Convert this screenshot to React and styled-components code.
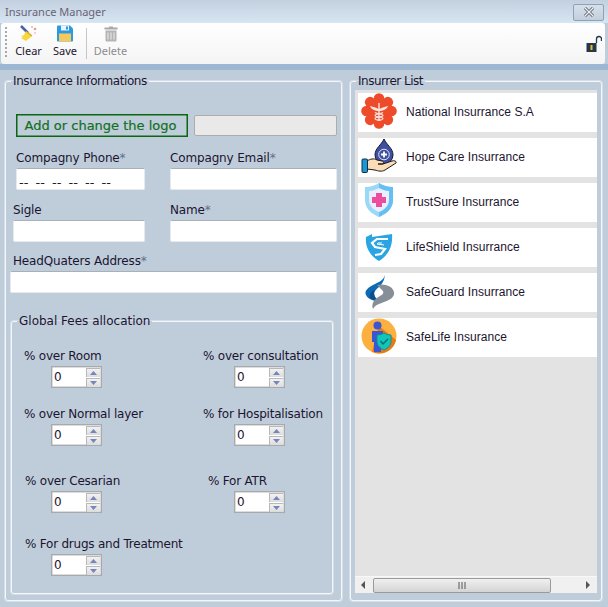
import styled, { createGlobalStyle } from "styled-components";

const GlobalStyle = createGlobalStyle`
  html, body {
    margin: 0;
    padding: 0;
    background: #d9e5f2;
  }
`;

const FlowerLogo = () => (
  <svg width="36" height="36" viewBox="0 0 36 36">
    <g fill="#ee4b2b">
      <circle cx="18" cy="18" r="12.500" />
      {[0, 45, 90, 135, 180, 225, 270, 315].map((a) => (
        <circle key={a} cx={18 + 12.5 * Math.cos((a * Math.PI) / 180)} cy={18 + 12.5 * Math.sin((a * Math.PI) / 180)} r="5.300" />
      ))}
    </g>
    <path d="M9 13c3 .5 6 1.500 9 3 3-1.500 6-2.500 9-3-1 3.500-5 5-9 5s-8-1.500-9-5z" fill="#fbe4dc" />
    <g fill="none" stroke="#fbe4dc" strokeWidth="1.100">
      <path d="M18 10v18" strokeWidth="1.400" />
      <path d="M14 19.500c3 2 8 1 8 3s-8 1-8 3 5 1.500 6 1.500" />
      <path d="M22 19.500c-3 2-8 1-8 3s8 1 8 3-5 1.500-6 1.500" />
    </g>
  </svg>
);

const HopeLogo = () => (
  <svg width="36" height="36" viewBox="0 0 36 36">
    <path d="M23 1c-2.500 6-9 9-9 16a9 9 0 0 0 18 0c0-7-6.500-10-9-16z" fill="#3f4f9f" stroke="#14183a" strokeWidth="1" />
    <circle cx="23" cy="16.500" r="5.300" fill="none" stroke="#dfe3f4" strokeWidth="1" />
    <path d="M23 13.500v6M20 16.500h6" stroke="#fff" strokeWidth="1.800" />
    <path d="M6 23c3-2 7-3 10-1l5 1c2 0 2 3 0 3h-4 5l9-3c3-1 5 1 4 2l-11 7c-3 2-7 1-10 0l-8-1z" fill="#fbdcb8" stroke="#1a1a1a" strokeWidth="1" strokeLinejoin="round" />
    <rect x="1" y="21" width="5.500" height="13.500" rx="1" fill="#1f96d4" stroke="#10303f" strokeWidth="1" />
  </svg>
);

const TrustLogo = () => (
  <svg width="36" height="36" viewBox="0 0 36 36">
    <path d="M18 0c3 2 8 4 14 4v13c0 9-7 14-14 17C11 31 4 26 4 17V4c6 0 11-2 14-4z" fill="#9ad8f8" />
    <path d="M18 0v34c7-3 14-8 14-17V4c-6 0-11-2-14-4z" fill="#64c0f2" />
    <path d="M18 5c3 1 6 3 10 3v9c0 6-5 10-10 12-5-2-10-6-10-12V8c4 0 7-2 10-3z" fill="#e9eefc" />
    <path d="M15 10h6v4h4v6h-4v4h-6v-4h-4v-6h4z" fill="#ec4d9c" />
  </svg>
);

const LifeShieldLogo = () => (
  <svg width="36" height="36" viewBox="0 0 36 36">
    <path d="M5 9l6-3v3l20-3c1 11-3 21-13 27C8 27 4 18 5 9z" fill="#29a5e3" />
    <path d="M27 11H16l-5 4 3 4 10 2-4 5-6 1" fill="none" stroke="#fff" strokeWidth="2.200" />
    <path d="M21 15h-4l-1 1 7 1" fill="none" stroke="#fff" strokeWidth="1" />
  </svg>
);

const SafeGuardLogo = () => (
  <svg width="36" height="36" viewBox="0 0 36 36">
    <path d="M24 0c0 5-3 8-10 11C7 14 3 18 5 22c2 4 7 6 13 6-4-3-6-7-4-10 3-4 10-7 10-18z" fill="#0f6ab4" />
    <path d="M14 17c-2 3-1 8 4 11-3 0-7-1-9-3-1-4 1-7 5-8z" fill="#0a4e8e" />
    <path d="M16 12c7-2 16 1 17 7 1 5-4 8-10 10-5 2-9 3-11 7-2-5 1-10 7-13 4-2 4-4 2-6s-3-3-5-5z" fill="#868e98" />
  </svg>
);

const SafeLifeLogo = () => (
  <svg width="36" height="36" viewBox="0 0 36 36">
    <circle cx="18" cy="18" r="17.500" fill="#fbb040" />
    <path d="M18 8l17 14c-2 8-8 13.500-17 13.500-3 0-5-1-7-2z" fill="#e57c12" />
    <circle cx="16.500" cy="7.500" r="4" fill="#3c55d6" />
    <path d="M11 13h11v11h-2v10h-7V24h-2z" fill="#3c55d6" />
    <path d="M23 15c2 1 4 2 7 2v6c0 5-3 7-7 9-4-2-7-4-7-9v-6c3 0 5-1 7-2z" fill="#14c4b8" stroke="#0d8f96" strokeWidth="1" />
    <path d="M19.500 23l2.500 3 5-5" fill="none" stroke="#0b6f78" strokeWidth="1.500" />
  </svg>
);

const BroomIcon = () => (
  <svg width="18" height="17" viewBox="0 0 18 17">
    <path d="M1 1l7 7" stroke="#4a5fa8" strokeWidth="2.500" />
    <path d="M6 6l6 5-6 5-5-3 2-1-2-1 3-1z" fill="#f8d73c" />
    <path d="M7 7l5 4" stroke="#d9a520" strokeWidth="1.200" />
    <circle cx="15" cy="4" r="1.300" fill="#f29a8a" />
    <circle cx="12" cy="2" r="1" fill="#f5b5a8" />
    <circle cx="15" cy="8" r="1" fill="#f7c4b8" />
  </svg>
);

const SaveIcon = () => (
  <svg width="16" height="16" viewBox="0 0 16 16">
    <path d="M0 1c0-.5.500-1 1-1h12l3 3v12c0 .5-.500 1-1 1H1c-.5 0-1-.5-1-1z" fill="#2a9be0" />
    <rect x="4" y="0" width="8" height="5" fill="#eaf4fb" />
    <rect x="9" y="1" width="2" height="3" fill="#2a9be0" />
    <rect x="2" y="8" width="12" height="8" fill="#f7c95c" />
  </svg>
);

const TrashIcon = () => (
  <svg width="14" height="16" viewBox="0 0 14 16">
    <path d="M5 1h4v1h4.500v2H.5V2H5z" fill="#a9a9a9" />
    <path d="M1.500 5h11v10c0 .5-.5 1-1 1h-9c-.5 0-1-.5-1-1z" fill="#b4b4b4" />
    <path d="M4 7v7M7 7v7M10 7v7" stroke="#eee" strokeWidth="1" />
  </svg>
);

const LockIcon = () => (
  <svg width="16" height="17" viewBox="0 0 16 17">
    <path d="M10.500 8V4a2.500 2.500 0 0 1 5 0v2" fill="none" stroke="#24384c" strokeWidth="1.300" />
    <rect x="0.500" y="8" width="10" height="9" fill="#24384c" />
    <rect x="4.500" y="10" width="2" height="5" fill="#f4b52a" />
  </svg>
);

const CloseIcon = () => (
  <svg width="14" height="10" viewBox="0 0 14 10">
    <path d="M3 1l8 8M11 1L3 9" stroke="#5a6470" strokeWidth="3" />
    <path d="M3 1l8 8M11 1L3 9" stroke="#eef2f6" strokeWidth="1.200" />
  </svg>
);

const insurers = [
  { name: "National Insurrance S.A", Logo: FlowerLogo },
  { name: "Hope Care Insurrance", Logo: HopeLogo },
  { name: "TrustSure Insurrance", Logo: TrustLogo },
  { name: "LifeShield Insurrance", Logo: LifeShieldLogo },
  { name: "SafeGuard Insurrance", Logo: SafeGuardLogo },
  { name: "SafeLife Insurance", Logo: SafeLifeLogo },
];

const fees = [
  { label: "% over Room", labelX: 0, spinX: 27 },
  { label: "% over consultation", labelX: 0, spinX: 31 },
  { label: "% over Normal layer", labelX: 0, spinX: 27 },
  { label: "% for Hospitalisation", labelX: 0, spinX: 31 },
  { label: "% over Cesarian", labelX: 1, spinX: 27 },
  { label: "% For ATR", labelX: 5, spinX: 31 },
  { label: "% For drugs and Treatment", labelX: 1, spinX: 27 },
];

const Spinner = () => (
  <SpinBox>
    <SpinInput defaultValue="0" />
    <SpinButtons>
      <SpinButton>
        <svg width="7" height="4" viewBox="0 0 7 4"><path d="M3.500 0L7 4H0z" fill="#7785bb" /></svg>
      </SpinButton>
      <SpinButton>
        <svg width="7" height="4" viewBox="0 0 7 4"><path d="M0 0h7L3.500 4z" fill="#7785bb" /></svg>
      </SpinButton>
    </SpinButtons>
  </SpinBox>
);

const App = () => {
  return (
    <Window>
      <GlobalStyle />
      <TitleBar>
        <Title>Insurance Manager</Title>
        <CloseButton><CloseIcon /></CloseButton>
      </TitleBar>

      <Toolbar>
        <Gripper />
        <ToolButton $width={27}>
          <BroomIcon />
          Clear
        </ToolButton>
        <ToolButton $width={24} $gap={11}>
          <SaveIcon />
          Save
        </ToolButton>
        <ToolSeparator />
        <ToolButton $width={33} $disabled>
          <TrashIcon />
          Delete
        </ToolButton>
        <LockSlot><LockIcon /></LockSlot>
      </Toolbar>
      <Band />

      <Body>
        <InfoGroup>
          <GroupLegend $spacing={-0.4}>Insurrance Informations</GroupLegend>

          <LogoRow>
            <LogoButton>Add or change the logo</LogoButton>
            <LogoPath />
          </LogoRow>

          <FormRow $left={10} $first={129} $second={167} $top={13}>
            <div>
              <FieldLabel>Compagny Phone<Star>*</Star></FieldLabel>
              <PhoneInput defaultValue="-- -- -- -- -- --" />
            </div>
            <div>
              <FieldLabel>Compagny Email<Star>*</Star></FieldLabel>
              <TextInput />
            </div>
          </FormRow>

          <FormRow $left={7} $first={132} $second={167} $top={12}>
            <div>
              <FieldLabel>Sigle</FieldLabel>
              <TextInput />
            </div>
            <div>
              <FieldLabel>Name<Star>*</Star></FieldLabel>
              <TextInput />
            </div>
          </FormRow>

          <AddressRow>
            <FieldLabel $indent={3}>HeadQuaters Address<Star>*</Star></FieldLabel>
            <TextInput />
          </AddressRow>

          <FeesGroup>
            <GroupLegend $spacing={0}>Global Fees allocation</GroupLegend>
            <FeesGrid>
              {fees.map((fee) => (
                <FeeCell key={fee.label}>
                  <FeeLabel $x={fee.labelX}>{fee.label}</FeeLabel>
                  <SpinSlot $x={fee.spinX}><Spinner /></SpinSlot>
                </FeeCell>
              ))}
            </FeesGrid>
          </FeesGroup>
        </InfoGroup>

        <ListGroup>
          <GroupLegend $spacing={-0.5}>Insurrer List</GroupLegend>
          <ListPanel>
            <Rows>
              {insurers.map(({ name, Logo }) => (
                <Row key={name}>
                  <LogoSlot><Logo /></LogoSlot>
                  <RowName>{name}</RowName>
                </Row>
              ))}
            </Rows>
            <ScrollBar>
              <svg width="4" height="8" viewBox="0 0 4 8"><path d="M4 0v8L0 4z" fill="#555" /></svg>
              <ScrollTrack>
                <ScrollThumb>
                  <svg width="9" height="7" viewBox="0 0 9 7"><path d="M1 0v7M4 0v7M7 0v7" stroke="#555" strokeWidth="1" /></svg>
                </ScrollThumb>
              </ScrollTrack>
              <svg width="4" height="8" viewBox="0 0 4 8"><path d="M0 0v8l4-4z" fill="#555" /></svg>
            </ScrollBar>
          </ListPanel>
        </ListGroup>
      </Body>
    </Window>
  );
};

const Window = styled.div`
  width: 608px;
  height: 607px;
  overflow: hidden;
  display: flex;
  flex-direction: column;
  background: #bfcddb;
  font-family: "DejaVu Sans", sans-serif;
  font-size: 12px;
  color: #1c1430;
`;

const TitleBar = styled.div`
  height: 23px;
  flex: none;
  box-sizing: border-box;
  display: flex;
  align-items: center;
  justify-content: space-between;
  padding: 0 4px 0 5px;
  background: linear-gradient(#c2d0df, #d8e5f3);
`;

const Title = styled.span`
  font-family: "Noto Sans", sans-serif;
  font-size: 11px;
  color: #6a6478;
`;

const CloseButton = styled.div`
  width: 31px;
  height: 17px;
  box-sizing: border-box;
  margin-top: 1px;
  display: flex;
  align-items: center;
  justify-content: center;
  border: 1px solid #8fa1b5;
  border-radius: 2px;
  background: linear-gradient(#d6e0ea, #c2cfdc);
`;

const Toolbar = styled.div`
  height: 41px;
  flex: none;
  box-sizing: border-box;
  margin: 0 3px 0 1px;
  display: flex;
  padding-left: 4px;
  border-radius: 3px;
  background: linear-gradient(#ffffff, #f4f4f4);
  font-family: "Noto Sans", sans-serif;
  font-size: 11px;
`;

const Gripper = styled.div`
  width: 1px;
  height: 30px;
  margin: 4px 7px 0 0;
  border-left: 2px dotted #a8a8a8;
`;

const ToolButton = styled.div`
  width: ${(p) => p.$width}px;
  margin-left: ${(p) => p.$gap || 0}px;
  display: flex;
  flex-direction: column;
  align-items: center;
  padding-top: 2px;
  white-space: nowrap;
  color: ${(p) => (p.$disabled ? "#8d8d8d" : "#1c1430")};
  line-height: 16px;

  svg {
    height: 17px;
    margin-bottom: 1px;
  }
`;

const ToolSeparator = styled.div`
  width: 1px;
  height: 31px;
  margin: 5px 7px 0 9px;
  background: #c6c6c6;
`;

const LockSlot = styled.div`
  margin-left: auto;
  padding: 12px 3px 0 0;
`;

const Band = styled.div`
  height: 6px;
  flex: none;
  background: #9db6d2;
`;

const Body = styled.div`
  display: flex;
  gap: 8px;
  padding: 4px 0 0 5px;
`;

const Group = styled.fieldset`
  margin: 0;
  padding: 0;
  box-sizing: border-box;
  min-width: 0;
  border: 1px solid #f4f7fa;
  border-radius: 3px;
  box-shadow: 0 0 0 1px rgba(225, 234, 243, 0.6);
`;

const InfoGroup = styled(Group)`
  width: 337px;
  height: 527px;
`;

const ListGroup = styled(Group)`
  width: 252px;
  height: 527px;
`;

const GroupLegend = styled.legend`
  margin-left: 5px;
  padding: 0 2px;
  line-height: 14px;
  font-size: 12px;
  letter-spacing: ${(p) => p.$spacing}px;
`;

const LogoRow = styled.div`
  display: flex;
  gap: 6px;
  padding: 26px 0 0 10px;
`;

const LogoButton = styled.div`
  width: 172px;
  height: 23px;
  box-sizing: border-box;
  display: flex;
  align-items: center;
  justify-content: center;
  padding-right: 3px;
  border: 1px solid #0a660f;
  box-shadow: inset 0 0 0 0.5px #0a660f;
  font-size: 13px;
  font-weight: 500;
  color: #12701f;
  -webkit-text-stroke: 0.2px #12701f;
`;

const LogoPath = styled.div`
  width: 143px;
  height: 21px;
  margin-top: 1px;
  box-sizing: border-box;
  border: 1px solid #adadad;
  border-radius: 2px;
  background: #e9e9e9;
`;

const FormRow = styled.div`
  display: grid;
  grid-template-columns: ${(p) => p.$first}px ${(p) => p.$second}px;
  column-gap: 25px;
  margin-top: ${(p) => p.$top}px;
  padding-left: ${(p) => p.$left}px;
`;

const AddressRow = styled.div`
  margin-top: 11px;
  padding-left: 4px;
  width: 327px;
`;

const FieldLabel = styled.div`
  height: 18px;
  line-height: 17px;
  margin-left: ${(p) => p.$indent || 0}px;
  letter-spacing: -0.15px;
  white-space: nowrap;
`;

const Star = styled.span`
  color: #5e6f80;
`;

const TextInput = styled.input`
  display: block;
  width: 100%;
  height: 22px;
  box-sizing: border-box;
  padding: 0 3px;
  border: 1px solid #e6e9ee;
  border-top-color: #a9b0b8;
  border-radius: 2px;
  background: #fff;
  font-family: "DejaVu Sans", sans-serif;
  font-size: 12px;
  outline: none;
`;

const PhoneInput = styled(TextInput)`
  padding: 7px 0 0 2px;
  font-size: 13px;
  word-spacing: 3px;
  color: #222;
`;

const FeesGroup = styled(Group)`
  width: 322px;
  height: 280px;
  margin: 21px 0 0 5px;
`;

const FeesGrid = styled.div`
  display: grid;
  grid-template-columns: 179px 1fr;
  grid-template-rows: 58px 67px 63px auto;
  padding: 20px 0 0 12px;
`;

const FeeCell = styled.div`
  display: flex;
  flex-direction: column;
  align-items: flex-start;
`;

const FeeLabel = styled.div`
  height: 18px;
  line-height: 16px;
  margin-left: ${(p) => p.$x}px;
  letter-spacing: -0.22px;
  white-space: nowrap;
`;

const SpinSlot = styled.div`
  margin-left: ${(p) => p.$x}px;
`;

const SpinBox = styled.div`
  width: 51px;
  height: 22px;
  box-sizing: border-box;
  display: flex;
  align-items: center;
  border: 1px solid #a6a9ae;
  background: #fff;
  box-shadow: inset 0 0 0 0.5px #bbb;
`;

const SpinInput = styled.input`
  width: 34px;
  height: 100%;
  box-sizing: border-box;
  padding: 0 0 0 2px;
  border: 0;
  background: transparent;
  font-family: "DejaVu Sans", sans-serif;
  font-size: 12px;
  color: #1c1430;
  outline: none;
`;

const SpinButtons = styled.div`
  width: 14px;
  display: flex;
  flex-direction: column;
  gap: 1px;
`;

const SpinButton = styled.div`
  height: 8px;
  display: flex;
  align-items: center;
  justify-content: center;
  border: 1px solid #b8b8b8;
  border-width: 1px 0 0 1px;
  background: linear-gradient(#f2f2f2, #dcdcdc);
`;

const ListPanel = styled.div`
  width: 242px;
  height: 503px;
  margin: 2px 0 0 4px;
  display: flex;
  flex-direction: column;
  justify-content: space-between;
  background: #e3e3e3;
`;

const Rows = styled.div`
  display: flex;
  flex-direction: column;
  gap: 6px;
  padding: 3px 0 0 3px;
`;

const Row = styled.div`
  height: 39px;
  display: flex;
  align-items: center;
  gap: 9px;
  padding-left: 3px;
  background: #fff;
`;

const LogoSlot = styled.div`
  width: 36px;
  height: 39px;
  flex: none;
`;

const RowName = styled.span`
  margin-bottom: 2px;
  font-family: "Liberation Sans", sans-serif;
  font-size: 12px;
  letter-spacing: 0.05px;
  color: #1c1430;
`;

const ScrollBar = styled.div`
  height: 17px;
  flex: none;
  display: flex;
  align-items: center;
  padding: 0 7px 0 6px;
  background: #f0f0f0;
  border-top: 1px solid #f8f8f8;
  box-sizing: border-box;
`;

const ScrollTrack = styled.div`
  flex: 1;
  padding: 0 0 0 8px;
  display: flex;
`;

const ScrollThumb = styled.div`
  width: 178px;
  height: 15px;
  box-sizing: border-box;
  display: flex;
  align-items: center;
  justify-content: center;
  border: 1px solid #9a9a9a;
  border-radius: 2px;
  background: linear-gradient(#f0f0f0, #d4d4d4);
`;

export default App;
